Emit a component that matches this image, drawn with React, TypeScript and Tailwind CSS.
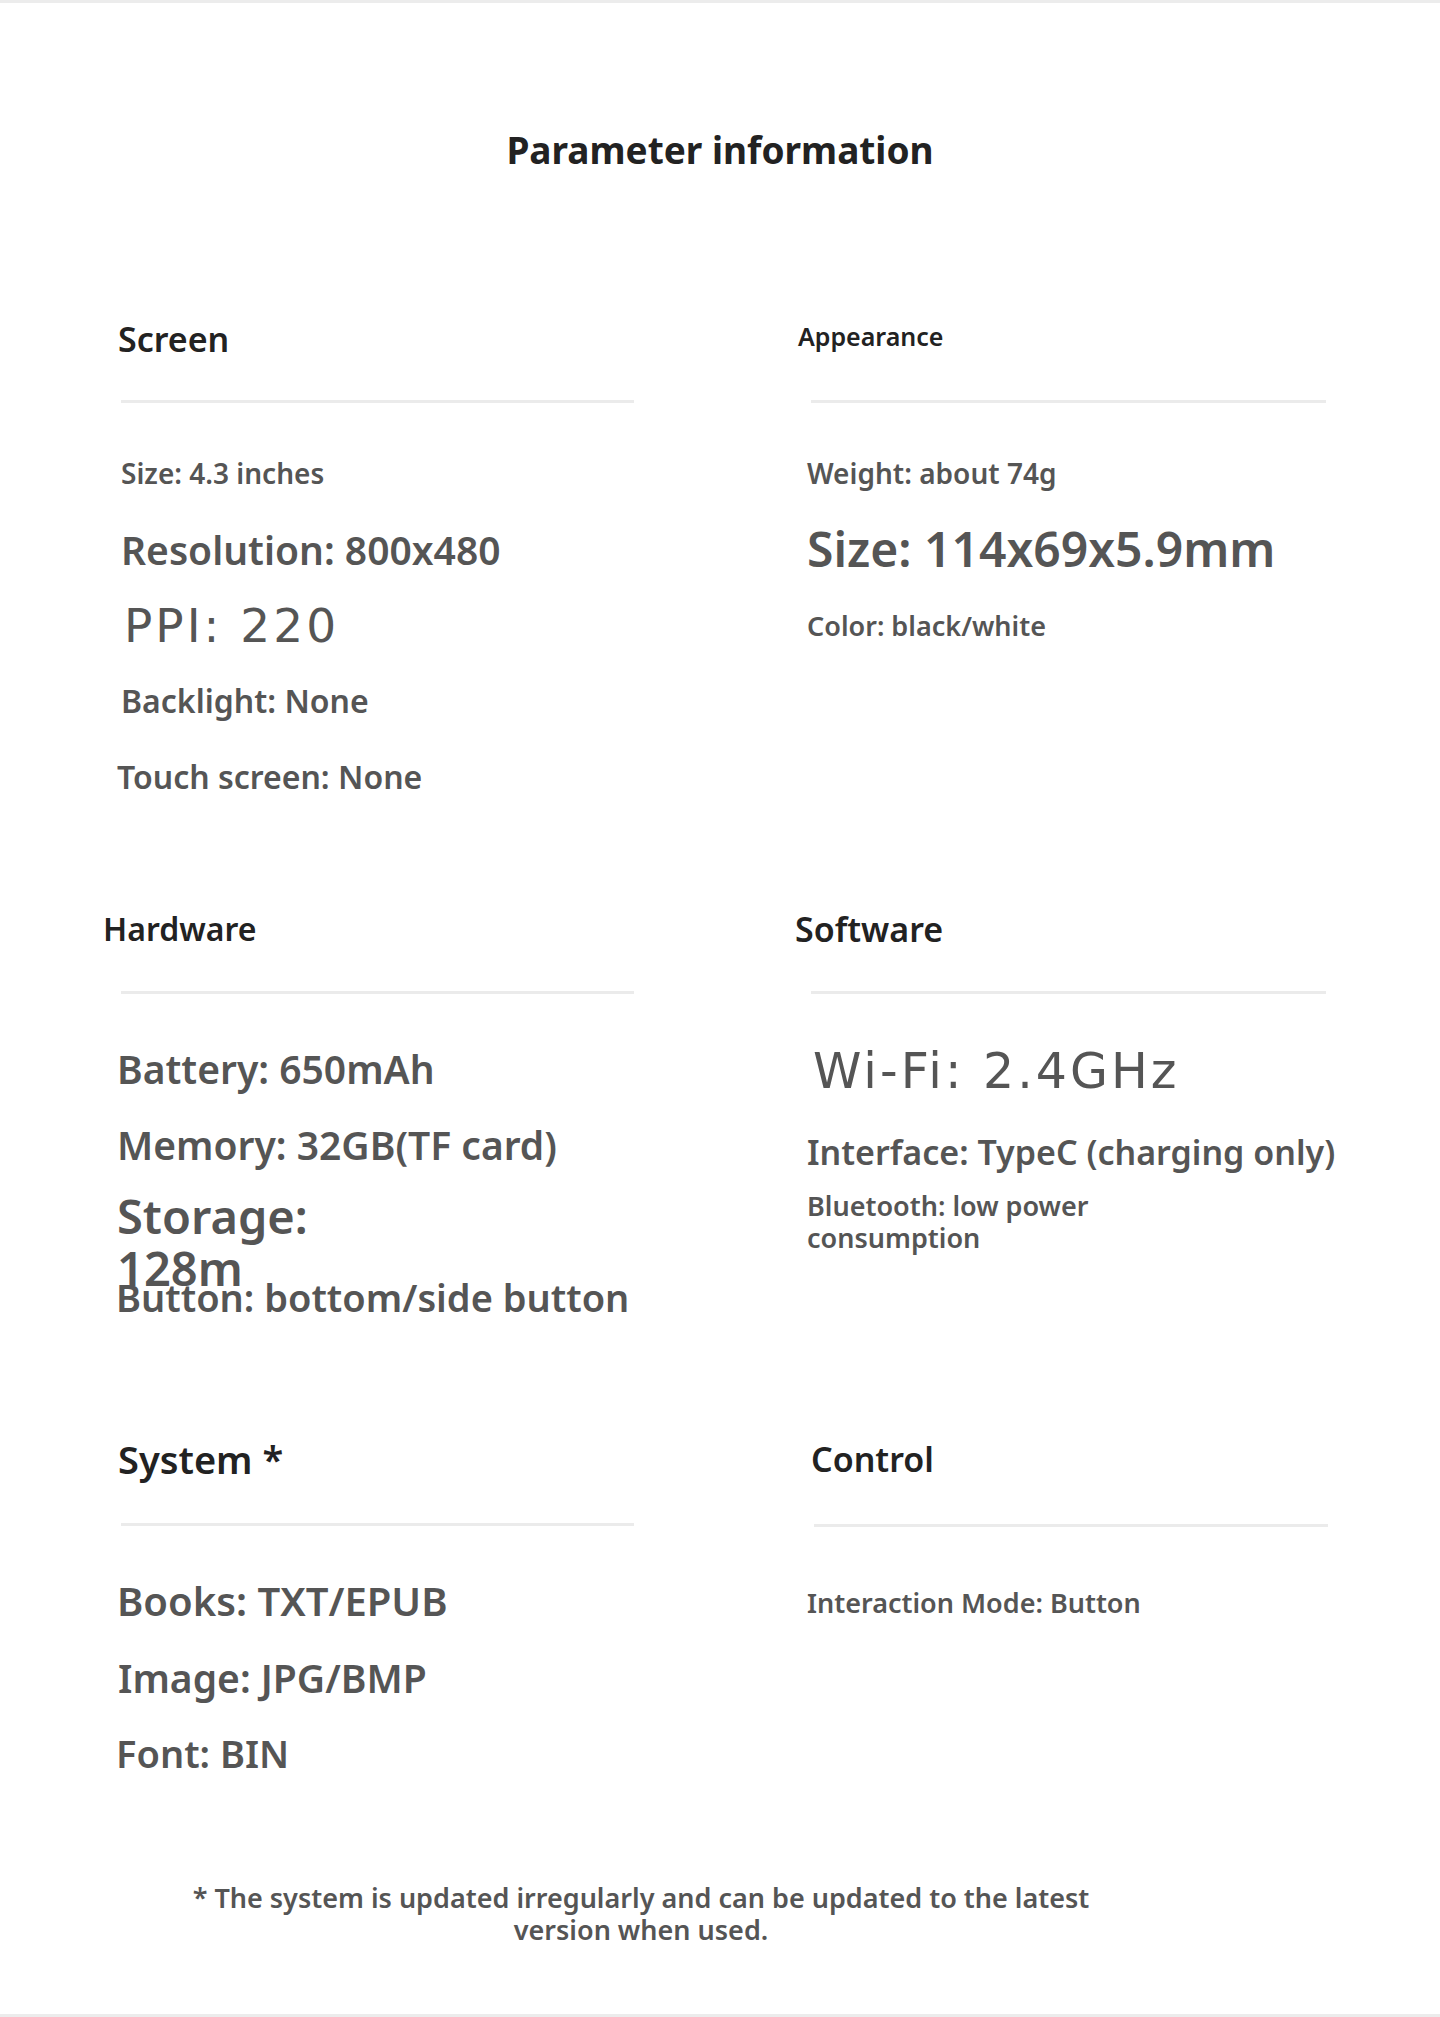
const sans = { fontFamily: '"Noto Sans", "Open Sans", sans-serif' }
const thin = { fontFamily: '"DejaVu Sans", "Noto Sans", sans-serif' }

function Heading({ children, className = "" }: { children: React.ReactNode; className?: string }) {
  return (
    <div className="h-[60px] flex items-center">
      <h3 className={`font-semibold text-[#222] leading-none whitespace-nowrap ${className}`}>{children}</h3>
    </div>
  )
}

function Divider({ className = "" }: { className?: string }) {
  return <div className={`h-[3px] bg-[#ebebeb] ${className}`}></div>
}

function Row({ children, className = "", style }: { children: React.ReactNode; className?: string; style?: React.CSSProperties }) {
  return (
    <p className={`h-[76px] flex items-center whitespace-nowrap leading-none ${className}`} style={style}>
      {children}
    </p>
  )
}

export default function App() {
  return (
    <div className="min-h-[2017px] w-[1440px] bg-white border-t-[3px] border-b-[3px] border-[#ececec] text-[#555]" style={sans}>
      <h1 className="pt-[125px] text-center text-[37px] font-bold leading-[44px] text-[#222]">Parameter information</h1>

      <div className="mt-[137px] px-[118px] grid grid-cols-2 gap-x-[172px]">
        {/* Screen */}
        <div>
          <Heading className="text-[34px]">Screen</Heading>
          <Divider className="mt-[31px] ml-[3px]" />
          <div className="mt-[32px] flex flex-col font-semibold">
            <Row className="text-[28px] ml-[3px]">Size: 4.3 inches</Row>
            <Row className="text-[39px] ml-[3px]">Resolution: 800x480</Row>
            <Row className="text-[47px] font-normal tracking-[3px] ml-[6px]" style={thin}>PPI: 220</Row>
            <Row className="text-[32px] ml-[3px]">Backlight: None</Row>
            <Row className="text-[32px] ml-[-1px]">Touch screen: None</Row>
          </div>
        </div>

        {/* Appearance */}
        <div>
          <Heading className="text-[25px] ml-[-8px] -translate-y-[3px]">Appearance</Heading>
          <Divider className="mt-[31px] ml-[5px] mr-[-4px]" />
          <div className="mt-[32px] flex flex-col font-semibold">
            <Row className="text-[28px] ml-[1px]">Weight: about 74g</Row>
            <Row className="text-[48px] ml-[1px]">Size: 114x69x5.9mm</Row>
            <Row className="text-[27px] ml-[1px]">Color: black/white</Row>
          </div>
        </div>

        {/* Hardware */}
        <div className="mt-[84px]">
          <Heading className="text-[32px] ml-[-15px]">Hardware</Heading>
          <Divider className="mt-[32px] ml-[3px]" />
          <div className="mt-[36px] flex flex-col font-semibold">
            <Row className="text-[39px] ml-[-1px]">Battery: 650mAh</Row>
            <Row className="text-[39px] ml-[-1px]">Memory: 32GB(TF card)</Row>
            <div className="mt-[8px] h-[69px] w-[280px] ml-[-1px]">
              <p className="text-[47px] leading-[52px]">Storage: 128m</p>
            </div>
            <Row className="text-[38px] ml-[-2px]">Button: bottom/side button</Row>
          </div>
        </div>

        {/* Software */}
        <div className="mt-[84px]">
          <Heading className="text-[34px] ml-[-11px]">Software</Heading>
          <Divider className="mt-[32px] ml-[5px] mr-[-4px]" />
          <div className="mt-[36px] flex flex-col font-semibold">
            <Row className="text-[49px] font-normal tracking-[3px] ml-[7px] pt-[6px]" style={thin}>Wi-Fi: 2.4GHz</Row>
            <Row className="mt-[8px] text-[34px] ml-[1px]">Interface: TypeC (charging only)</Row>
            <p className="w-[330px] text-[27px] leading-[32px] ml-[1px]">Bluetooth: low power consumption</p>
          </div>
        </div>

        {/* System */}
        <div className="mt-[94px]">
          <Heading className="text-[38px]">System *</Heading>
          <Divider className="mt-[34px] ml-[3px]" />
          <div className="mt-[37px] flex flex-col font-semibold">
            <Row className="text-[40px] ml-[-1px]">Books: TXT/EPUB</Row>
            <Row className="text-[39px]">Image: JPG/BMP</Row>
            <Row className="text-[38px] ml-[-2px]">Font: BIN</Row>
          </div>
        </div>

        {/* Control */}
        <div className="mt-[94px]">
          <Heading className="text-[34px] ml-[5px]">Control</Heading>
          <Divider className="mt-[35px] ml-[8px] mr-[-6px]" />
          <div className="mt-[37px] flex flex-col font-semibold">
            <Row className="text-[27px] ml-[1px]">Interaction Mode: Button</Row>
          </div>
        </div>
      </div>

      <div className="mt-[91px] pl-[171px]">
        <p className="w-[940px] text-center text-[27px] font-semibold leading-[32px]">
          * The system is updated irregularly and can be updated to the latest version when used.
        </p>
      </div>
    </div>
  )
}
